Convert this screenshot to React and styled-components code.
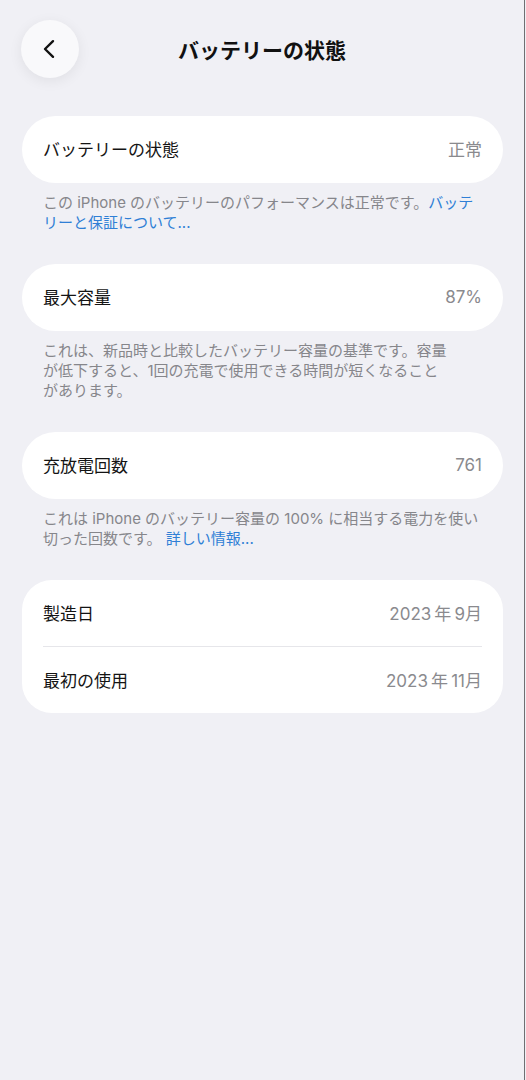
import React from 'react';
import styled, { createGlobalStyle } from 'styled-components';

const GlobalStyle = createGlobalStyle`
  html, body {
    margin: 0;
    padding: 0;
    background: #f0f0f5;
  }
  body {
    font-family: "Inter", "Noto Sans CJK JP", sans-serif;
    -webkit-font-smoothing: antialiased;
  }
`;

const Screen = styled.div`
  width: 525px;
  min-height: 1080px;
  box-sizing: border-box;
  border-right: 1px solid #6f6f72;
  background: #f0f0f5;
`;

const Header = styled.header`
  display: grid;
  grid-template-columns: 58px 1fr 58px;
  align-items: center;
  height: 58px;
  padding: 20px 21px 0;
`;

const BackButton = styled.button`
  width: 58px;
  height: 58px;
  border: none;
  border-radius: 50%;
  background: #f9f9fb;
  box-shadow: 0 3px 14px rgba(0, 0, 0, 0.07);
  display: flex;
  align-items: center;
  justify-content: center;
  padding: 0 2px 0 0;
  cursor: pointer;
`;

const Title = styled.h1`
  margin: 0;
  text-align: center;
  font-size: 21px;
  font-weight: 700;
  color: #111;
`;

const Content = styled.main`
  padding: 38px 21px 0 22px;
`;

const Card = styled.section`
  background: #fff;
  border-radius: ${(p) => p.$radius}px;
  overflow: hidden;
`;

const Row = styled.div`
  height: ${(p) => p.$height || 67}px;
  display: flex;
  align-items: center;
  justify-content: space-between;
  padding: 0 21px 2px;
  box-sizing: border-box;
  font-size: 17px;
`;

const Label = styled.span`
  color: #141414;
`;

const Value = styled.span`
  color: #8a8a8e;
`;

const Divider = styled.hr`
  margin: 0 21px;
  border: none;
  height: 1px;
  background: #e6e6ea;
`;

const Note = styled.p`
  margin: 0 0 31px;
  padding: 10px 14px 0 21px;
  font-size: 15px;
  line-height: 20px;
  color: #86868b;
  white-space: nowrap;
`;

const More = styled.a`
  color: #2f7fd6;
  text-decoration: none;
`;

const Chevron = () => (
  <svg width="14" height="20" viewBox="0 0 14 20" fill="none">
    <path
      d="M11 2.2 L3 10 L11 17.8"
      stroke="#111"
      strokeWidth="2.4"
      strokeLinecap="round"
      strokeLinejoin="round"
    />
  </svg>
);

export default function App() {
  return (
    <>
      <GlobalStyle />
      <Screen>
        <Header>
          <BackButton aria-label="戻る">
            <Chevron />
          </BackButton>
          <Title>バッテリーの状態</Title>
          <span />
        </Header>

        <Content>
          <Card $radius={34}>
            <Row>
              <Label>バッテリーの状態</Label>
              <Value>正常</Value>
            </Row>
          </Card>
          <Note>
            この iPhone のバッテリーのパフォーマンスは正常です。<More href="#">バッテ</More>
            <br />
            <More href="#">リーと保証について...</More>
          </Note>

          <Card $radius={34}>
            <Row>
              <Label>最大容量</Label>
              <Value>87%</Value>
            </Row>
          </Card>
          <Note>
            これは、新品時と比較したバッテリー容量の基準です。容量
            <br />
            が低下すると、1回の充電で使用できる時間が短くなること
            <br />
            があります。
          </Note>

          <Card $radius={34}>
            <Row>
              <Label>充放電回数</Label>
              <Value>761</Value>
            </Row>
          </Card>
          <Note>
            これは iPhone のバッテリー容量の 100% に相当する電力を使い
            <br />
            切った回数です。 <More href="#">詳しい情報...</More>
          </Note>

          <Card $radius={30}>
            <Row $height={66}>
              <Label>製造日</Label>
              <Value>2023{'\u2009'}年{'\u2009'}9月</Value>
            </Row>
            <Divider />
            <Row $height={66}>
              <Label>最初の使用</Label>
              <Value>2023{'\u2009'}年{'\u2009'}11月</Value>
            </Row>
          </Card>
        </Content>
      </Screen>
    </>
  );
}
